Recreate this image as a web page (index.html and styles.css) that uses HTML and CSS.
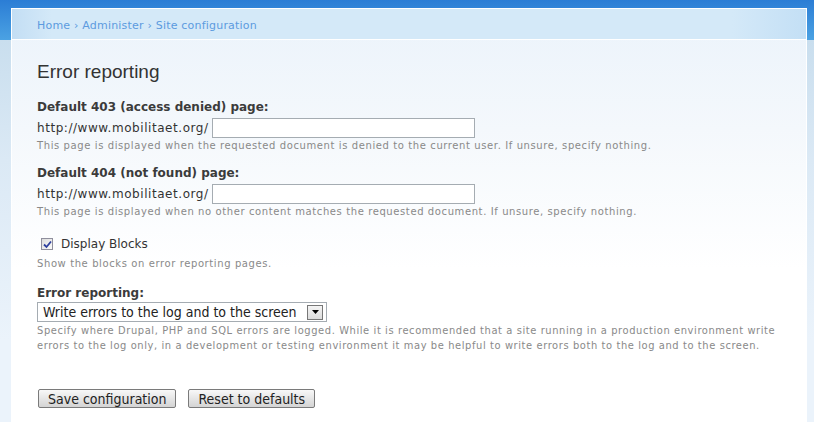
FILE: index.html
```html
<!DOCTYPE html>
<html>
<head>
<meta charset="utf-8">
<link rel="stylesheet" href="styles.css">
</head>
<body>
<div class="page">
  <div class="panel">
    <div class="crumbs"><a href="#">Home</a> › <a href="#">Administer</a> › <a href="#">Site configuration</a></div>
    <div class="content">
      <h1 class="title">Error reporting</h1>
      <form class="form">
        <div class="item">
          <label class="label">Default 403 (access denied) page:</label>
          <div class="field-row"><span class="prefix">http://www.mobilitaet.org/</span><input class="text" type="text"></div>
          <div class="desc">This page is displayed when the requested document is denied to the current user. If unsure, specify nothing.</div>
        </div>
        <div class="item">
          <label class="label">Default 404 (not found) page:</label>
          <div class="field-row"><span class="prefix">http://www.mobilitaet.org/</span><input class="text" type="text"></div>
          <div class="desc">This page is displayed when no other content matches the requested document. If unsure, specify nothing.</div>
        </div>
        <div class="item check-item">
          <label class="check-row"><span class="checkbox"><svg width="9" height="9" viewBox="0 0 9 9"><path d="M1 4.5 L3.5 7 L8 1.5" fill="none" stroke="#2d3f9e" stroke-width="1.8"/></svg></span>Display Blocks</label>
          <div class="desc check-desc">Show the blocks on error reporting pages.</div>
        </div>
        <div class="item err-item">
          <label class="label">Error reporting:</label>
          <div class="select"><span class="select-text">Write errors to the log and to the screen</span><span class="select-btn"><svg width="7" height="4" viewBox="0 0 7 4"><path d="M0 0 H7 L3.5 4 Z" fill="#000"/></svg></span></div>
          <div class="desc desc-narrow">Specify where Drupal, PHP and SQL errors are logged. While it is recommended that a site running in a production environment write errors to the log only, in a development or testing environment it may be helpful to write errors both to the log and to the screen.</div>
        </div>
        <div class="buttons">
          <button class="btn" type="button">Save configuration</button>
          <button class="btn" type="button">Reset to defaults</button>
        </div>
      </form>
    </div>
  </div>
</div>
</body>
</html>
```
FILE: styles.css
```css
html, body { margin: 0; padding: 0; }
body {
  width: 814px;
  height: 422px;
  overflow: hidden;
  background: linear-gradient(to bottom, #2b7dd5 0px, #4ba2e3 40px, #c9deee 40px, #dbe9f5 160px, #ebf3fb 340px);
  font-family: "DejaVu Sans", Verdana, sans-serif;
  color: #333;
}
.page { padding: 8px 7px 0 11px; }
.panel {
  height: 414px;
  border-left: 1px solid #ffffff;
  border-right: 1px solid #ffffff;
  border-top: 1px solid #ffffff;
  background: linear-gradient(to bottom, #ebf3fb 0px, #f4f8fc 120px, #ffffff 260px);
}
.crumbs {
  height: 31px;
  box-sizing: border-box;
  padding: 10px 0 0 25px;
  border-bottom: 1px solid #ffffff;
  background: linear-gradient(to right, #c3def4 0px, #d4e9f8 40px, #d4e9f8 720px, #c3dff5 795px);
  font-size: 11px;
  letter-spacing: 0.2px;
  color: #5c9bdf;
}
.crumbs a { color: #5c9bdf; text-decoration: none; }
.content { padding: 0 25px; }
.title {
  margin: 0;
  padding: 21px 0 0 0;
  font-family: "Liberation Sans", Arial, sans-serif;
  font-weight: normal;
  font-size: 19px;
  line-height: 22px;
  color: #333;
}
.form { margin-top: 17px; }
.item { margin-bottom: 13px; }
.label {
  display: block;
  font-weight: bold;
  font-size: 12px;
  line-height: 15px;
  color: #3b3b3b;
}
.field-row { display: flex; align-items: center; margin-top: 3px; }
.prefix { font-size: 12px; letter-spacing: 0.55px; color: #333; margin-right: 3px; }
.text {
  width: 263px;
  height: 20px;
  box-sizing: border-box;
  border: 1px solid #a5acb2;
  background: #fff;
  margin: 0;
  padding: 0;
}
.desc {
  font-size: 10px;
  letter-spacing: 0.6px;
  line-height: 14px;
  color: #898989;
  margin-top: 1px;
}
.check-item { margin-top: 18px; }
.check-row { display: flex; align-items: center; font-size: 12px; color: #333; }
.checkbox {
  width: 12px;
  height: 12px;
  box-sizing: border-box;
  border: 1px solid #8f8f9d;
  background: linear-gradient(to bottom right, #dcdcdc, #fbfbfb);
  margin: 0 8px 0 4px;
  display: flex;
  align-items: center;
  justify-content: center;
}
.desc.check-desc { margin-top: 6px; }
.err-item { margin-top: 15px; }
.select {
  display: flex;
  align-items: center;
  justify-content: space-between;
  width: 290px;
  height: 20px;
  box-sizing: border-box;
  border: 1px solid #a5acb2;
  background: #fff;
  margin-top: 1px;
  padding: 0 3px 0 5px;
}
.select-text { font-family: "DejaVu Sans Condensed", "DejaVu Sans", sans-serif; font-size: 14px; color: #222; }
.select-btn {
  width: 16px;
  height: 15px;
  box-sizing: border-box;
  border: 1px solid #777;
  background: linear-gradient(to bottom, #f4f4f4, #dcdcdc);
  display: flex;
  align-items: center;
  justify-content: center;
}
.desc-narrow {
  font-family: "DejaVu Sans Condensed", "DejaVu Sans", sans-serif;
  font-size: 11px;
  letter-spacing: 0.6px;
  line-height: 15px;
  margin-top: 1px;
}
.buttons { margin-top: 36px; display: flex; gap: 12px; padding-left: 1px; }
.btn {
  font-family: "DejaVu Sans Condensed", "DejaVu Sans", sans-serif;
  font-size: 14px;
  color: #222;
  height: 19px;
  padding: 0 9px;
  border: 1px solid #7a7a7a;
  border-radius: 2px;
  background: linear-gradient(to bottom, #f8f8f8, #e2e2e2 60%, #d4d4d4);
  line-height: 16px;
}
```
